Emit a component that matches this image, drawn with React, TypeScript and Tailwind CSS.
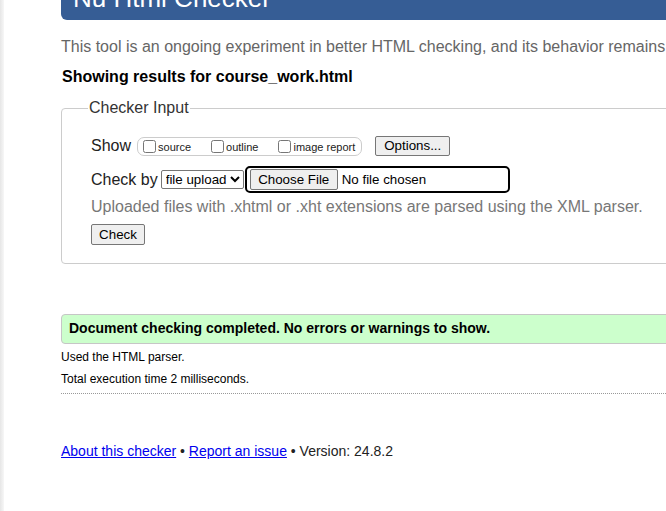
import React from 'react';

export default function App() {
    return (
        <div className="w-[666px] h-[511px] overflow-hidden bg-white flex font-['Liberation_Sans',Arial,sans-serif] text-[#222]">

            {/* Left edge shade */}
            <div className="w-[4px] shrink-0 bg-gradient-to-r from-[#e6e6e6] to-[#f7f7f7]" />

            <div className="pl-[57px] w-[760px] shrink-0">

                {/* Title bar, scrolled mostly out of view */}
                <header className="h-[20px] bg-[#365d95] rounded-bl-[6px] overflow-hidden pl-[12px]">
                    <h1 className="text-[26px] leading-none text-white -mt-[15px] whitespace-nowrap">Nu Html Checker</h1>
                </header>

                <p className="mt-[17px] text-[16px] leading-[20px] text-[#666] whitespace-nowrap">
                    This tool is an ongoing experiment in better HTML checking, and its behavior remains subject to change
                </p>
                <p className="mt-[10px] ml-[1px] text-[16px] leading-[20px] font-bold text-black whitespace-nowrap">
                    Showing results for course_work.html
                </p>

                {/* Checker input */}
                <fieldset className="mt-[12px] border border-[#ccc] rounded-[4px] pl-[29px] pb-[17px]">
                    <legend className="-ml-[3px] px-[1px] text-[16px] leading-[18px] text-[#333]">Checker Input</legend>

                    <div className="flex items-center mt-[19px] h-[20px]">
                        <span className="text-[16px] text-[#222]">Show</span>
                        <div className="ml-[6px] flex items-center h-[19px] border border-[#ccc] rounded-[7px] pl-[5px] pr-[6px]">
                            <input type="checkbox" className="w-[13px] h-[13px]" />
                            <span className="ml-[2px] text-[11px] leading-none mt-[3px]">source</span>
                            <input type="checkbox" className="ml-[20px] w-[13px] h-[13px]" />
                            <span className="ml-[2px] text-[11px] leading-none mt-[3px]">outline</span>
                            <input type="checkbox" className="ml-[20px] w-[13px] h-[13px]" />
                            <span className="ml-[2px] text-[11px] leading-none mt-[3px]">image report</span>
                        </div>
                        <button className="ml-[13px] h-[20px] w-[75px] bg-[#efefef] border border-[#767676] rounded-[2px] text-[13.33px] leading-none text-black">
                            Options...
                        </button>
                    </div>

                    <div className="flex items-center mt-[10px] h-[27px]">
                        <span className="text-[16px] text-[#222]">Check by</span>
                        <select className="ml-[3px] h-[19px] w-[83px] bg-white border border-[#767676] rounded-[2px] text-[13.33px] text-black">
                            <option>file upload</option>
                        </select>
                        <div className="ml-[1px] h-[27px] w-[265px] border-2 border-black rounded-[5px] flex items-center pl-[3px]">
                            <span className="h-[21px] w-[88px] flex items-center justify-center bg-[#efefef] border border-[#767676] rounded-[2px] text-[13.33px] text-black">
                                Choose File
                            </span>
                            <span className="ml-[4px] text-[13.33px] text-black">No file chosen</span>
                        </div>
                    </div>

                    <p className="mt-[4px] text-[16px] leading-[20px] text-[#777] whitespace-nowrap">
                        Uploaded files with .xhtml or .xht extensions are parsed using the XML parser.
                    </p>

                    <button className="mt-[7px] h-[21px] w-[54px] bg-[#efefef] border border-[#767676] rounded-[2px] text-[13.33px] leading-none text-black">
                        Check
                    </button>
                </fieldset>

                {/* Results */}
                <div className="mt-[50px] h-[30px] bg-[#ccffcc] border border-[#c6c6c6] rounded-[4px] flex items-center pl-[7px]">
                    <span className="text-[14px] font-bold text-black whitespace-nowrap">Document checking completed. No errors or warnings to show.</span>
                </div>
                <p className="mt-[6px] text-[12px] leading-[14px] text-black">Used the HTML parser.</p>
                <p className="mt-[8px] text-[12px] leading-[14px] text-black">Total execution time 2 milliseconds.</p>
                <div className="mt-[7px] border-t border-dotted border-[#999]" />

                {/* Footer */}
                <p className="mt-[49px] text-[14px] leading-[16px] text-[#222] whitespace-nowrap">
                    <a className="text-[#0000ee] underline">About this checker</a>
                    {' • '}
                    <a className="text-[#0000ee] underline">Report an issue</a>
                    {' • Version: 24.8.2'}
                </p>
            </div>
        </div>
    );
}
